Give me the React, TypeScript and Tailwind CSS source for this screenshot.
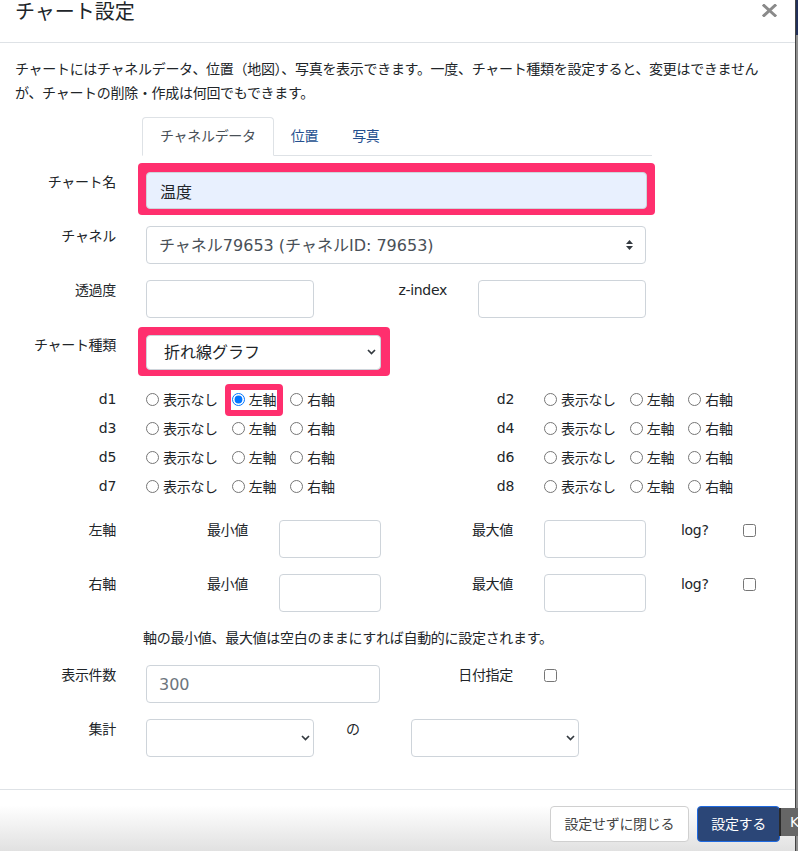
import React from "react";

const FONT = "font-['DejaVu_Sans','Noto_Sans_CJK_JP',sans-serif]";

// base control look; height / colour are given per control
const base = "shrink-0 rounded-[4px] border border-[#ced4da] text-[16px] tracking-normal outline-none";
const field = `${base} h-[38px] bg-white px-[12px] text-[#495057]`;

const Chevron = () => (
  <svg width="9" height="6" viewBox="0 0 9 6" className="pointer-events-none absolute top-1/2 -translate-y-1/2">
    <path d="M1 1l3.5 3.5L8 1" fill="none" stroke="#343a40" strokeWidth="1.7" />
  </svg>
);

function Label({ children, className = "w-[116px]" }: { children: React.ReactNode; className?: string }) {
  return <span className={`shrink-0 text-right leading-[21px] ${className}`}>{children}</span>;
}

const OPTIONS = ["表示なし", "左軸", "右軸"];

function RadioGroup({ name, checked, highlight }: { name: string; checked?: number; highlight?: boolean }) {
  return (
    <div className="ml-[30px] flex items-center">
      {OPTIONS.map((o, i) => {
        const marked = highlight && i === 1;
        return (
          <label
            key={o}
            className={`flex items-center leading-[18px] ${
              marked
                ? "-my-[7px] -mr-[7px] ml-[7px] rounded-[4px] border-[6px] border-[#ff2f6e] p-[1px]"
                : i > 0
                  ? "ml-[14px]"
                  : ""
            }`}
          >
            <input type="radio" name={name} defaultChecked={checked === i} className="m-0 h-[13px] w-[13px]" />
            <span className="ml-[4px]">{o}</span>
          </label>
        );
      })}
    </div>
  );
}

function DRow({ left, right, first }: { left: string; right: string; first?: boolean }) {
  return (
    <div className="flex h-[29px] items-center">
      <div className="flex w-[398px] items-center">
        <Label>{left}</Label>
        <RadioGroup name={left} checked={first ? 1 : undefined} highlight={first} />
      </div>
      <div className="flex items-center">
        <Label>{right}</Label>
        <RadioGroup name={right} />
      </div>
    </div>
  );
}

function AxisRow({ label, top }: { label: string; top: string }) {
  return (
    <div className={`flex items-start ${top}`}>
      <Label>{label}</Label>
      <Label className="w-[132px]">最小値</Label>
      <input className={`${field} ml-[31px] w-[102px]`} />
      <Label className="w-[132px]">最大値</Label>
      <input className={`${field} ml-[31px] w-[102px]`} />
      <span className="ml-[35px] w-[62px] shrink-0 leading-[21px]">log?</span>
      <input type="checkbox" className="m-0 mt-[4px] h-[13px] w-[13px]" />
    </div>
  );
}

export default function App() {
  return (
    <div className={`flex h-[851px] w-[798px] overflow-hidden bg-white ${FONT}`}>
      <div className="relative flex w-[795px] shrink-0 flex-col text-[14px] leading-[21px] tracking-[-0.3px] text-[#212529]">
        {/* Header */}
        <div className="flex h-[43px] shrink-0 items-start justify-between border-b border-[#dee2e6] pl-[15px] pr-[18px]">
          <h5 className="text-[20px] leading-[24px] tracking-normal">チャート設定</h5>
          <svg width="15" height="13" viewBox="0 0 15 13" className="mt-[4px]">
            <path d="M2 1.5l11 10M13 1.5l-11 10" stroke="#8a8a8a" strokeWidth="3" strokeLinecap="square" />
          </svg>
        </div>

        {/* Body */}
        <div className="flex-1 pt-[14px]">
          <p className="px-[15px] leading-[24px]">
            チャートにはチャネルデータ、位置（地図）、写真を表示できます。一度、チャート種類を設定すると、変更はできませんが、チャートの削除・作成は何回でもできます。
          </p>

          <div className="ml-[142px] mt-[12px] flex w-[510px] border-b border-[#dee2e6]">
            <div className="-mb-px flex h-[39px] items-center rounded-t-[4px] border border-[#dee2e6] border-b-white bg-white px-[17px] text-[#495057]">
              チャネルデータ
            </div>
            <div className="flex h-[38px] items-center px-[17px] text-[#24508f]">位置</div>
            <div className="flex h-[38px] items-center px-[17px] text-[#24508f]">写真</div>
          </div>

          {/* チャート名 (highlighted) */}
          <div className="mt-[7px] flex items-start">
            <Label className="w-[116px] pt-[9px]">チャート名</Label>
            <div className="ml-[22px] rounded-[4px] bg-[#ff2f6e] px-[8px] pb-[6px] pt-[9px]">
              <input
                defaultValue="温度"
                className={`${base} block h-[37px] w-[501px] rounded-[2px] bg-[#e8f0fe] px-[13px] text-[#212529]`}
              />
            </div>
          </div>

          <div className="mt-[11px] flex items-start">
            <Label>チャネル</Label>
            <div className="relative ml-[30px]">
              <select className={`${field} w-[500px] appearance-none`}>
                <option>チャネル79653 (チャネルID: 79653)</option>
              </select>
              <svg width="7" height="10" viewBox="0 0 7 10" className="pointer-events-none absolute right-[13px] top-1/2 -translate-y-1/2">
                <path d="M0 4L3.5 0 7 4zM0 6l3.5 4L7 6z" fill="#343a40" />
              </svg>
            </div>
          </div>

          <div className="mt-[16px] flex items-start">
            <Label>透過度</Label>
            <input className={`${field} ml-[30px] w-[168px]`} />
            <Label className="w-[133px]">z-index</Label>
            <input className={`${field} ml-[31px] w-[168px]`} />
          </div>

          {/* チャート種類 (highlighted) */}
          <div className="mt-[9px] flex items-start">
            <Label className="w-[116px] pt-[8px]">チャート種類</Label>
            <div className="ml-[22px] rounded-[4px] bg-[#ff2f6e] pb-[6px] pl-[8px] pr-[9px] pt-[8px]">
              <div className="relative">
                <select className={`${base} block h-[35px] w-[235px] appearance-none rounded-[2px] bg-white pl-[17px] text-[#212529]`}>
                  <option>折れ線グラフ</option>
                </select>
                <span className="absolute right-[14px] top-[17px]">
                  <Chevron />
                </span>
              </div>
            </div>
          </div>

          <div className="mt-[9px]">
            <DRow left="d1" right="d2" first />
            <DRow left="d3" right="d4" />
            <DRow left="d5" right="d6" />
            <DRow left="d7" right="d8" />
          </div>

          <AxisRow label="左軸" top="mt-[19px]" />
          <AxisRow label="右軸" top="mt-[16px]" />

          <p className="ml-[143px] mt-[16px]">軸の最小値、最大値は空白のままにすれば自動的に設定されます。</p>

          <div className="mt-[16px] flex items-start">
            <Label>表示件数</Label>
            <input
              defaultValue="300"
              className={`${base} ml-[30px] h-[38px] w-[234px] bg-white px-[12px] text-[#6c757d]`}
            />
            <Label className="w-[133px]">日付指定</Label>
            <input type="checkbox" className="m-0 ml-[31px] mt-[4px] h-[13px] w-[13px]" />
          </div>

          <div className="mt-[16px] flex items-start">
            <Label>集計</Label>
            <div className="relative ml-[30px]">
              <select className={`${field} w-[168px] appearance-none`}>
                <option></option>
              </select>
              <span className="absolute right-[13px] top-[19px]">
                <Chevron />
              </span>
            </div>
            <span className="w-[97px] shrink-0 pl-[32px] leading-[21px]">の</span>
            <div className="relative">
              <select className={`${field} w-[168px] appearance-none`}>
                <option></option>
              </select>
              <span className="absolute right-[13px] top-[19px]">
                <Chevron />
              </span>
            </div>
          </div>
        </div>

        {/* Footer */}
        <div className="flex h-[62px] shrink-0 items-start justify-end gap-[8px] border-t border-[#dee2e6] bg-linear-to-b from-white from-[25%] to-[#e1e1e1] pr-[15px] pt-[16px]">
          <button className="h-[36px] rounded-[4px] border border-[#d0d0d0] bg-white px-[14px] text-[#444]">
            設定せずに閉じる
          </button>
          <button className="h-[36px] rounded-[4px] border-[1.5px] border-[#1f6ae0] bg-[#2b4677] px-[13px] text-white">
            設定する
          </button>
        </div>

        <div className="absolute left-[779px] top-[808px] flex h-[28px] w-[40px] items-center border-l-2 border-[#2a2a2a] bg-[#666] pl-[9px] text-[14px] text-white">
          K
        </div>
      </div>

      {/* backdrop edge */}
      <div className="flex flex-1 flex-col border-l border-[#444]">
        <div className="h-[35px] bg-[#22305a]" />
        <div className="flex-1 bg-[#8e8e8e]" />
      </div>
    </div>
  );
}
